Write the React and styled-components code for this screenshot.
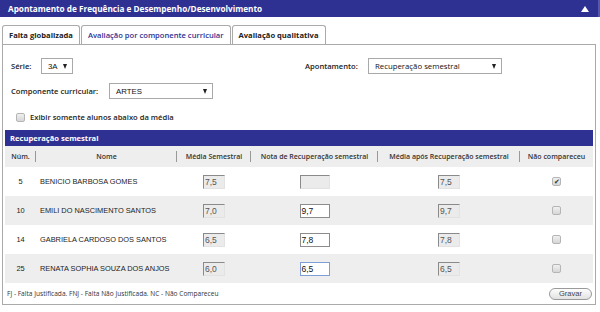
import React from "react";
import styled, { createGlobalStyle } from "styled-components";

const GlobalStyle = createGlobalStyle`
  html, body {
    margin: 0;
    padding: 0;
    background: #fff;
    width: 600px;
    height: 312px;
    overflow: hidden;
  }
  body {
    font-family: "Open Sans", "Liberation Sans", sans-serif;
    color: #222;
  }
`;

const BLUE = "#2e3192";

const TitleBar = styled.div`
  height: 17px;
  background: ${BLUE};
  border-right: 2px solid #5558b0;
  display: flex;
  align-items: center;
  justify-content: space-between;
  padding: 0 8px 0 8px;
  color: #fff;
  font-size: 8.2px;
  font-weight: 700;
`;

const Collapse = styled.span`
  width: 0;
  height: 0;
  border-left: 4px solid transparent;
  border-right: 4px solid transparent;
  border-bottom: 6px solid #fff;
  margin-right: 1px;
`;

const Wrap = styled.div`
  padding: 8px 4px 0 2px;
`;

const Tabs = styled.div`
  display: flex;
  height: 19px;
`;

const Tab = styled.div`
  display: flex;
  align-items: center;
  padding: 0 6px;
  border: 1px solid #aaa;
  border-bottom: none;
  border-radius: 3px 3px 0 0;
  margin-right: 1px;
  font-size: 7.6px;
  font-weight: ${(p) => (p.$active ? 600 : 700)};
  color: ${(p) => (p.$active ? "#2e3192" : "#222")};
  background: #fff;
`;

const Panel = styled.div`
  border: 1px solid #aaa;
  height: 261px;
  padding: 13px 2px 0 2px;
  box-sizing: border-box;
  display: flex;
  flex-direction: column;
`;

const FilterRow = styled.div`
  display: grid;
  grid-template-columns: ${(p) => p.$cols || "1fr"};
  align-items: center;
  padding-left: 6px;
  height: 16px;
  margin-bottom: ${(p) => p.$gap || 0}px;
`;

const Field = styled.div`
  display: flex;
  align-items: center;
`;

const Label = styled.span`
  font-size: 7.6px;
  font-weight: 600;
  color: #222;
  width: ${(p) => p.$w}px;
`;

const Select = styled.div`
  width: ${(p) => p.$w}px;
  height: 16px;
  box-sizing: border-box;
  border: 1px solid #a9a9a9;
  background: #fff;
  display: flex;
  align-items: center;
  justify-content: space-between;
  padding: 0 5px 0 6px;
  font-size: 7.8px;
  color: #111;
  font-family: ${(p) => (p.$arial ? '"Liberation Sans", sans-serif' : '"Open Sans", sans-serif')};
`;

const Caret = styled.span`
  width: 0;
  height: 0;
  border-left: 2.5px solid transparent;
  border-right: 2.5px solid transparent;
  border-top: 5px solid #222;
`;

const CheckRow = styled.label`
  display: flex;
  align-items: center;
  gap: 5px;
  padding-left: 11px;
  height: 12px;
  margin-bottom: 7px;
  font-size: 7.6px;
  font-weight: 600;
  color: #222;
`;

const Box = styled.span`
  width: 7px;
  height: 7px;
  border: 1px solid #b5b5b5;
  border-radius: 2px;
  background: linear-gradient(#f0f0f0, #d6d6d6);
  display: inline-flex;
  align-items: center;
  justify-content: center;
  font-size: 7px;
  line-height: 1;
  color: #333;
`;

const SectionBar = styled.div`
  height: 16px;
  background: ${BLUE};
  color: #fff;
  font-size: 7.6px;
  font-weight: 700;
  display: flex;
  align-items: center;
  padding-left: 5px;
`;

const COLS = "31px 141px 74px 127px 142px 1fr";

const HeadRow = styled.div`
  display: grid;
  grid-template-columns: ${COLS};
  height: 21px;
  background: #eee;
  align-items: center;
`;

const HeadCell = styled.div`
  position: relative;
  text-align: center;
  font-size: 7px;
  font-weight: 600;
  color: #333;
  white-space: nowrap;
  ${(p) =>
    p.$sep &&
    `&::after {
      content: "";
      position: absolute;
      right: 0;
      top: -1px;
      height: 11px;
      width: 1px;
      background: #999;
    }`}
`;

const Row = styled.div`
  display: grid;
  grid-template-columns: ${COLS};
  height: 29px;
  align-items: center;
  background: ${(p) => (p.$alt ? "#eee" : "#fff")};
`;

const Cell = styled.div`
  display: flex;
  justify-content: ${(p) => (p.$left ? "flex-start" : "center")};
  padding-left: ${(p) => (p.$left ? "4px" : 0)};
  font-family: "Liberation Sans", sans-serif;
  font-size: 7.4px;
  color: #222;
  white-space: nowrap;
`;

const Grade = styled.div`
  width: ${(p) => p.$w}px;
  height: 14px;
  box-sizing: border-box;
  padding-left: 1px;
  font-family: "Liberation Sans", sans-serif;
  font-size: 8.5px;
  line-height: 12px;
  background: ${(p) => (p.$readonly ? "#ebebeb" : "#fff")};
  color: ${(p) => (p.$readonly ? "#555" : "#111")};
  border: 1px solid ${(p) => (p.$focus ? "#7e9fd6" : "#8c8c8c")};
  ${(p) =>
    p.$readonly &&
    `border-color: #8a8a8a #e2e2e2 #e2e2e2 #8a8a8a;`}
`;

const Footer = styled.div`
  flex: 1;
  display: flex;
  align-items: center;
  justify-content: space-between;
  padding: 0 1px 0 2px;
  font-size: 6.6px;
  color: #333;
`;

const Button = styled.button`
  width: 43px;
  height: 12px;
  padding: 0;
  border: 1px solid #9a9a9a;
  border-radius: 6px;
  background: linear-gradient(#fdfdfd, #e2e2e2);
  font-family: "Liberation Sans", sans-serif;
  font-size: 7.5px;
  color: #444;
  line-height: 10px;
`;

const students = [
  { num: 5, name: "BENICIO BARBOSA GOMES", media: "7,5", nota: "", apos: "7,5", nc: true },
  { num: 10, name: "EMILI DO NASCIMENTO SANTOS", media: "7,0", nota: "9,7", apos: "9,7" },
  { num: 14, name: "GABRIELA CARDOSO DOS SANTOS", media: "6,5", nota: "7,8", apos: "7,8" },
  { num: 25, name: "RENATA SOPHIA SOUZA DOS ANJOS", media: "6,0", nota: "6,5", apos: "6,5", focus: true },
];

export default function App() {
  return (
    <>
      <GlobalStyle />
      <TitleBar>
        <span>Apontamento de Frequência e Desempenho/Desenvolvimento</span>
        <Collapse />
      </TitleBar>
      <Wrap>
        <Tabs>
          <Tab>Falta globalizada</Tab>
          <Tab $active>Avaliação por componente curricular</Tab>
          <Tab>Avaliação qualitativa</Tab>
        </Tabs>
        <Panel>
          <FilterRow $cols="294px 1fr" $gap={9}>
            <Field>
              <Label $w={30}>Série:</Label>
              <Select $w={32} $arial>
                3A <Caret />
              </Select>
            </Field>
            <Field>
              <Label $w={63}>Apontamento:</Label>
              <Select $w={134}>
                Recuperação semestral <Caret />
              </Select>
            </Field>
          </FilterRow>
          <FilterRow $gap={12}>
            <Field>
              <Label $w={98}>Componente curricular:</Label>
              <Select $w={104} $arial>
                ARTES <Caret />
              </Select>
            </Field>
          </FilterRow>
          <CheckRow>
            <Box />
            Exibir somente alunos abaixo da média
          </CheckRow>
          <SectionBar>Recuperação semestral</SectionBar>
          <HeadRow>
            <HeadCell $sep>Núm.</HeadCell>
            <HeadCell $sep>Nome</HeadCell>
            <HeadCell $sep>Média Semestral</HeadCell>
            <HeadCell $sep>Nota de Recuperação semestral</HeadCell>
            <HeadCell $sep>Média após Recuperação semestral</HeadCell>
            <HeadCell>Não compareceu</HeadCell>
          </HeadRow>
          {students.map((s, i) => (
            <Row key={s.num} $alt={i % 2 === 1}>
              <Cell>{s.num}</Cell>
              <Cell $left>{s.name}</Cell>
              <Cell>
                <Grade $w={22} $readonly>{s.media}</Grade>
              </Cell>
              <Cell>
                {s.nota ? (
                  <Grade $w={30} $focus={s.focus}>{s.nota}</Grade>
                ) : (
                  <Grade $w={30} $readonly />
                )}
              </Cell>
              <Cell>
                <Grade $w={22} $readonly>{s.apos}</Grade>
              </Cell>
              <Cell>
                <Box>{s.nc ? "✔" : ""}</Box>
              </Cell>
            </Row>
          ))}
          <Footer>
            <span>FJ - Falta Justificada. FNJ - Falta Não Justificada. NC - Não Compareceu</span>
            <Button>Gravar</Button>
          </Footer>
        </Panel>
      </Wrap>
    </>
  );
}
